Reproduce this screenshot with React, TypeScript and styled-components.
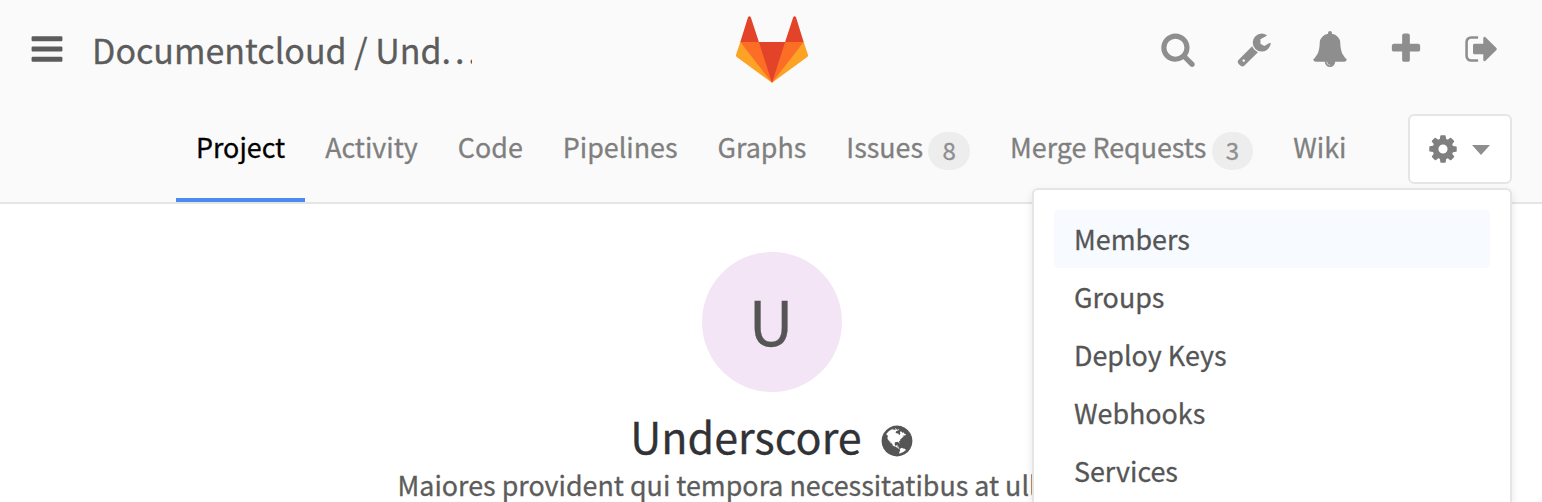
import React from "react";
import styled, { createGlobalStyle } from "styled-components";

const GlobalStyle = createGlobalStyle`
  * { box-sizing: border-box; }
  body {
    margin: 0;
    background: #fff;
    font-family: "Noto Sans CJK SC", "Noto Sans", sans-serif;
    color: #5c5c5c;
    -webkit-text-stroke: 0.3px currentColor;
  }
`;

const glyphs = {
  bars: "M1664 1344v128q0 26-19 45t-45 19h-1408q-26 0-45-19t-19-45v-128q0-26 19-45t45-19h1408q26 0 45 19t19 45zm0-512v128q0 26-19 45t-45 19h-1408q-26 0-45-19t-19-45v-128q0-26 19-45t45-19h1408q26 0 45 19t19 45zm0-512v128q0 26-19 45t-45 19h-1408q-26 0-45-19t-19-45v-128q0-26 19-45t45-19h1408q26 0 45 19t19 45z",
  search: "M1216 832q0-185-131.5-316.5t-316.5-131.5-316.5 131.5-131.5 316.5 131.5 316.5 316.5 131.5 316.5-131.5 131.5-316.5zm512 832q0 52-38 90t-90 38q-54 0-90-38l-343-342q-179 124-399 124-143 0-273.5-55.5t-225-150-150-225-55.5-273.5 55.5-273.5 150-225 225-150 273.5-55.5 273.5 55.5 225 150 150 225 55.5 273.5q0 220-124 399l343 343q37 37 37 90z",
  wrench: "M448 1472q0-26-19-45t-45-19-45 19-19 45 19 45 45 19 45-19 19-45zm644-420l-682 682q-37 37-90 37-52 0-91-37l-106-108q-38-36-38-90 0-53 38-91l681-681q39 98 114.5 173.5t173.5 114.5zm634-435q0 39-23 106-47 134-164.5 217.5t-258.5 83.5q-185 0-316.5-131.5t-131.5-316.5 131.5-316.5 316.5-131.5q58 0 121.5 16.5t107.5 46.5q16 11 16 28t-16 28l-293 169v224l193 107q5-3 79-48.5t135.5-81 70.5-35.5q15 0 23.5 10t8.5 25z",
  bell: "M912 1696q0-16-16-16-59 0-101.5-42.5t-42.5-101.5q0-16-16-16t-16 16q0 73 51.5 124.5t124.5 51.5q16 0 16-16zm816-288q0 52-38 90t-90 38h-448q0 106-75 181t-181 75-181-75-75-181h-448q-52 0-90-38t-38-90q50-42 91-88t85-119.5 74.5-158.5 50-206 19.5-260q0-152 117-282.5t307-158.5q-8-19-8-39 0-40 28-68t68-28 68 28 28 68q0 20-8 39 190 28 307 158.5t117 282.5q0 139 19.5 260t50 206 74.5 158.5 85 119.5 91 88z",
  plus: "M1600 736v192q0 40-28 68t-68 28h-416v416q0 40-28 68t-68 28h-192q-40 0-68-28t-28-68v-416h-416q-40 0-68-28t-28-68v-192q0-40 28-68t68-28h416v-416q0-40 28-68t68-28h192q40 0 68 28t28 68v416h416q40 0 68 28t28 68z",
  signOut: "M704 1440q0 4 1 20t.5 26.5-3 23.5-10 19.5-20.5 6.5h-320q-119 0-203.5-84.5t-84.5-203.5v-704q0-119 84.5-203.5t203.5-84.5h320q13 0 22.5 9.5t9.5 22.5q0 4 1 20t.5 26.5-3 23.5-10 19.5-20.5 6.5h-320q-66 0-113 47t-47 113v704q0 66 47 113t113 47h312l11.5 1 11.5 3 8 5.5 7 9 2 13.5zm928-544q0 26-19 45l-544 544q-19 19-45 19t-45-19-19-45v-288h-448q-26 0-45-19t-19-45v-384q0-26 19-45t45-19h448v-288q0-26 19-45t45-19 45 19l544 544q19 19 19 45z",
  cog: "M1152 896q0-106-75-181t-181-75-181 75-75 181 75 181 181 75 181-75 75-181zm512-109v222q0 12-8 23t-20 13l-185 28q-19 54-39 91 35 50 107 138 10 12 10 25t-9 23q-27 37-99 108t-94 71q-12 0-26-9l-138-108q-44 23-91 38-16 136-29 186-7 28-36 28h-222q-14 0-24.5-8.5t-11.5-21.5l-28-184q-49-16-90-37l-141 107q-10 9-25 9-14 0-25-11-126-114-165-168-7-10-7-23 0-12 8-23 15-21 51-66.5t54-70.5q-27-50-41-99l-183-27q-13-2-21-12.5t-8-23.5v-222q0-12 8-23t19-13l186-28q14-46 39-92-40-57-107-138-10-12-10-24 0-10 9-23 26-36 98.5-107.5t94.5-71.5q13 0 26 10l138 107q44-23 91-38 16-136 29-186 7-28 36-28h222q14 0 24.5 8.5t11.5 21.5l28 184q49 16 90 37l142-107q9-9 24-9 13 0 25 10 129 119 165 170 7 8 7 22 0 12-8 23-15 21-51 66.5t-54 70.5q26 50 41 98l183 28q13 2 21 12.5t8 23.5z",
  globe: "M896 128q209 0 385.5 103t279.5 279.5 103 385.5-103 385.5-279.5 279.5-385.5 103-385.5-103-279.5-279.5-103-385.5 103-385.5 279.5-279.5 385.5-103zm274 521q-2 1-9.5 9.5t-13.5 9.5q2 0 4.5-5t5-11 3.5-7q6-7 22-15 14-6 52-12 34-8 51 11-2-2 9.5-13t14.5-12q3-2 15-4.5t15-7.5l2-22q-12 1-17.5-7t-6.5-21q0 2-6 8 0-7-4.5-8t-11.5 1-9 1q-10-3-15-7.5t-8-16.5-4-15q-2-5-9.5-11t-9.5-10q-1-2-2.5-5.5t-3-6.5-4-5.5-5.5-2.5-7 5-7.5 10-4.5 5q-3-2-6-1.5t-4.5 1-4.5 3-5 3.5q-3 2-8.5 3t-8.5 2q15-5-1-11-10-4-16-3 9-4 7.5-12t-8.5-14h5q-1-4-8.5-8.5t-17.5-8.5-13-6q-8-5-34-9.5t-33-.5q-5 6-4.5 10.5t4 14 3.5 12.5q1 6-5.5 13t-6.5 12q0 7 14 15.5t10 21.5q-3 8-16 16t-16 12q-5 8-1.5 18.5t10.5 16.5q2 2 1.5 4t-3.5 4.5-5.5 4-6.5 3.5l-3 2q-11 5-20.5-6t-13.5-26q-7-25-16-30-23-8-29 1-5-13-41-26-25-9-58-4 6-1 0-15-7-15-19-12 3-6 4-17.5t1-13.5q3-13 12-23 1-1 7-8.5t9.5-13.5.5-6q35 4 50-11 5-5 11.5-17t10.5-17q9-6 14-5.5t14.5 5.5 14.5 5q14 1 15.5-11t-7.5-20q12 1 3-17-4-7-8-9-12-4-27 5-8 4 2 8-1-1-9.5 10.5t-16.5 17.5-16-5q-1-1-5.5-13.5t-9.5-13.5q-8 0-16 15 3-8-11-15t-24-8q19-12-8-27-7-4-20.5-5t-19.5 4q-5 7-5.5 11.5t5 8 10.5 5.5 11.5 4 8.5 3q14 10 8 14-2 1-8.5 3.5t-11.5 4.5-6 4q-3 4 0 14t-2 14q-5-5-9-17.5t-7-16.5q7 9-25 6l-10-1q-4 0-16 2t-20.5 1-13.5-8q-4-8 0-20 1-4 4-2-4-3-11-9.5t-10-8.5q-46 15-94 41 6 1 12-1 5-2 13-6.5t10-5.5q34-14 42-7l5-5q14 16 20 25-7-4-30-1-20 6-22 12 7 12 5 18-4-3-11.5-10t-14.5-11-15-5q-16 0-22 1-146 80-235 222 7 7 12 8 4 1 5 9t2.5 11 11.5-3q9 8 3 19 1-1 44 27 19 17 21 21 3 11-10 18-1-2-9-9t-9-4q-3 5 .5 18.5t10.5 12.5q-7 0-9.5 16t-2.5 35.5-1 23.5l2 1q-3 12 5.5 34.5t21.5 19.5q-13 3 20 43 6 8 8 9 3 2 12 7.5t15 10 10 10.5q4 5 10 22.5t14 23.5q-2 6 9.5 20t10.5 23q-1 0-2.5 1t-2.5 1q3 7 15.5 14t15.5 13q1 3 2 10t3 11 8 2q2-20-24-62-15-25-17-29-3-5-5.5-15.5t-4.5-14.5q2 0 6 1.5t8.5 3.5 7.5 4 2 3q-3 7 2 17.5t12 18.5 17 19 12 13q6 6 14 19.5t0 13.5q9 0 20 10.5t17 19.5q5 8 8 26t5 24q2 7 8.5 13.5t12.5 9.5l16 8 13 7q5 2 18.5 10.5t21.5 11.5q10 4 16 4t14.5-2.5 13.5-3.5q15-2 29 15t21 21q36 19 55 11-2 1 .5 7.5t8 15.5 9 14.5 5.5 8.5q5 6 18 15t18 15q6-4 7-9-3 8 7 20t18 10q14-3 14-32-31 15-49-18 0-1-2.5-5.5t-4-8.5-2.5-8.5 0-7.5 5-3q9 0 10-3.5t-2-12.5-4-13q-1-8-11-20t-12-15q-5 9-16 8t-16-9q0 1-1.5 5.5t-1.5 6.5q-13 0-15-1 1-3 2.5-17.5t3.5-22.5q1-4 5.5-12t7.5-14.5 4-12.5-4.5-9.5-17.5-2.5q-19 1-26 20-1 3-3 10.5t-5 11.5-9 7q-7 3-24 2t-24-5q-13-8-22.5-29t-9.5-37q0-10 2.5-26.5t3-25-5.5-24.5q3-2 9-9.5t10-10.5q2-1 4.5-1.5t4.5 0 4-1.5 3-6q-1-1-4-3-3-3-4-3 7 3 28.5-1.5t27.5 1.5q15 11 22-2 0-1-2.5-9.5t-.5-13.5q5 27 29 9 3 3 15.5 5t17.5 5q3 2 7 5.5t5.5 4.5 5-.5 8.5-6.5q10 14 12 24 11 40 19 44 7 3 11 2t4.5-9.5 0-14-1.5-12.5l-1-8v-18l-1-8q-15-3-18.5-12t1.5-18.5 15-18.5q1-1 8-3.5t15.5-6.5 12.5-8q21-19 15-35 7 0 11-9-1 0-5-3t-7.5-5-4.5-2q9-5 2-16 5-3 7.5-11t7.5-10q9 12 21 2 8-8 1-16 5-7 20.5-10.5t18.5-9.5q7 2 8-2t1-12 3-12q4-5 15-9t13-5l17-11q3-4 0-4 18 2 31-11 10-11-6-20 3-6-3-9.5t-15-5.5q3-1 11.5-.5t10.5-1.5q15-10-7-16-17-5-43 12zm-163 877q206-36 351-189-3-3-12.5-4.5t-12.5-3.5q-18-7-24-8 1-7-2.5-13t-8-9-12.5-8-11-7q-2-2-7-6t-7-5.5-7.5-4.5-8.5-2-10 1l-3 1q-3 1-5.5 2.5t-5.5 3-4 3 0 2.5q-21-17-36-22-5-1-11-5.5t-10.5-7-10-1.5-11.5 7q-5 5-6 15t-2 13q-7-5 0-17.5t2-18.5q-3-6-10.5-4.5t-12 4.5-11.5 8.5-9 6.5-8.5 5.5-8.5 7.5q-3 4-6 12t-5 11q-2-4-11.5-6.5t-9.5-5.5q2 10 4 35t5 38q7 31-12 48-27 25-29 40-4 22 12 26 0 7-8 20.5t-7 21.5q0 6 2 16z",
};

const Glyph = styled.svg<{ $size: number }>`
  display: block;
  flex: none;
  width: ${(p) => p.$size}px;
  height: ${(p) => p.$size}px;
  fill: currentColor;
`;

function Icon({ name, size = 36 }: { name: keyof typeof glyphs; size?: number }) {
  return (
    <Glyph $size={size} viewBox="0 0 1792 1792" aria-hidden="true">
      <path d={glyphs[name]} />
    </Glyph>
  );
}

const Page = styled.div`
  height: 100vh;
  overflow: hidden;
`;

const Header = styled.header`
  height: 204px;
  background: #fafafa;
  border-bottom: 2px solid #e5e5e5;
`;

const TopBar = styled.div`
  display: grid;
  grid-template-columns: 1fr 72px 1fr;
  align-items: center;
  height: 98px;
  padding: 0 42px;
`;

const TitleArea = styled.div`
  display: flex;
  align-items: center;
  gap: 27px;
  margin-left: -13px;
`;

const Title = styled.h1`
  width: 380px;
  margin: 2px 0 0;
  overflow: hidden;
  white-space: nowrap;
  font-size: 34px;
  line-height: 48px;
  font-weight: 400;
`;

const Dots = styled.span`
  letter-spacing: 3.9px;
`;

const Logo = styled.svg`
  display: block;
  width: 72px;
  height: 67px;
  margin-left: 1px;
`;

const Actions = styled.div`
  display: flex;
  justify-content: flex-end;
  gap: 40px;
  color: #8e8e8e;
`;

const NavBar = styled.nav`
  display: flex;
  justify-content: space-between;
  height: 104px;
  padding: 0 30px 0 176px;
`;

const Tabs = styled.div`
  display: flex;
`;

const Tab = styled.a<{ $active?: boolean }>`
  display: flex;
  align-items: flex-start;
  padding: 29px 20px 0;
  height: 104px;
  white-space: nowrap;
  font-size: 26.85px;
  line-height: 40px;
  color: ${(p) => (p.$active ? "#000" : "#7f7f7f")};
  border-bottom: 4px solid ${(p) => (p.$active ? "#4a8bee" : "transparent")};
`;

const Badge = styled.span`
  margin: 5px 0 0 5.3px;
  width: 41.7px;
  height: 38px;
  border-radius: 19px;
  background: #ededed;
  color: #8e8e8e;
  text-align: center;
  font-size: 24px;
  line-height: 36px;
`;

const Settings = styled.div`
  position: relative;
  margin-top: 16px;
`;

const SettingsButton = styled.button`
  display: flex;
  align-items: center;
  gap: 13px;
  width: 104px;
  height: 70px;
  padding: 0 0 1px 17px;
  background: #fff;
  border: 2px solid #e5e5e5;
  border-radius: 6px;
  color: #7f7f7f;
`;

const Caret = styled.span`
  margin-top: 2px;
  border: 9px solid transparent;
  border-top: 10px solid #8e8e8e;
  border-bottom: 0;
`;

const Menu = styled.ul`
  position: absolute;
  z-index: 2;
  top: 74px;
  right: 0;
  width: 480px;
  margin: 0;
  padding: 20px 20px 2px;
  list-style: none;
  background: #fff;
  border: 2px solid #e5e5e5;
  border-bottom: 0;
  border-radius: 6px 6px 0 0;
  box-shadow: 0 4px 8px rgba(0, 0, 0, 0.1);
`;

const MenuItem = styled.li<{ $hovered?: boolean }>`
  height: 58px;
  padding: 0 20px;
  border-radius: 4px;
  background: ${(p) => (p.$hovered ? "#f7faff" : "transparent")};
  color: #555;
  font-size: 26.85px;
  line-height: 58px;
`;

const Project = styled.main`
  display: flex;
  flex-direction: column;
  align-items: center;
  padding: 48px 0 0 2px;
`;

const Avatar = styled.div`
  width: 140px;
  height: 140px;
  border-radius: 50%;
  background: #f3e5f5;
  color: #555;
  text-align: center;
  font-size: 62px;
  line-height: 134px;
  text-indent: -2px;
`;

const NameRow = styled.div`
  display: flex;
  align-items: center;
  gap: 17px;
  height: 66px;
  margin: 14px 0 0 1px;
`;

const Name = styled.h2`
  margin: 0;
  color: #313236;
  font-size: 43px;
  line-height: 58px;
  height: 66px;
  font-weight: 400;
`;

const Visibility = styled.span`
  margin-top: 4px;
  color: #555;
`;

const Description = styled.p`
  width: 749px;
  margin: -7px 0 0;
  white-space: nowrap;
  font-size: 26.85px;
  line-height: 40px;
`;

const tabs: { label: string; count?: number }[] = [
  { label: "Project" },
  { label: "Activity" },
  { label: "Code" },
  { label: "Pipelines" },
  { label: "Graphs" },
  { label: "Issues", count: 8 },
  { label: "Merge Requests", count: 3 },
  { label: "Wiki" },
];

const menuItems = ["Members", "Groups", "Deploy Keys", "Webhooks", "Services"];

export default function App() {
  return (
    <Page>
      <GlobalStyle />
      <Header>
        <TopBar>
          <TitleArea>
            <Icon name="bars" />
            <Title>
              Documentcloud / Und<Dots>...</Dots>
            </Title>
          </TitleArea>
          <Logo viewBox="0 0 72 67" aria-label="GitLab">
            <path fill="#fca326" d="M4.3 26L.1 38.4q-.4 1.7 1 2.8L36 66.8l34.9-25.6q1.4-1.1 1-2.8L67.7 26z" />
            <path fill="#fc6d26" d="M4.3 26H67.7L36 66.8z" />
            <path fill="#e24329" d="M4.3 26L12 1.2q1.4-1.900 2.800 0L22.900 26H49.100L57.200 1.200q1.400-1.900 2.800 0L67.700 26H49.100L36 66.800 22.900 26z" />
          </Logo>
          <Actions>
            <Icon name="search" />
            <Icon name="wrench" />
            <Icon name="bell" />
            <Icon name="plus" />
            <Icon name="signOut" />
          </Actions>
        </TopBar>
        <NavBar>
          <Tabs>
            {tabs.map((tab, i) => (
              <Tab key={tab.label} $active={i === 0}>
                {tab.label}
                {tab.count !== undefined && <Badge>{tab.count}</Badge>}
              </Tab>
            ))}
          </Tabs>
          <Settings>
            <SettingsButton aria-label="Settings">
              <Icon name="cog" size={32} />
              <Caret />
            </SettingsButton>
            <Menu>
              {menuItems.map((item, i) => (
                <MenuItem key={item} $hovered={i === 0}>
                  {item}
                </MenuItem>
              ))}
            </Menu>
          </Settings>
        </NavBar>
      </Header>
      <Project>
        <Avatar>U</Avatar>
        <NameRow>
          <Name>Underscore</Name>
          <Visibility>
            <Icon name="globe" />
          </Visibility>
        </NameRow>
        <Description>Maiores provident qui tempora necessitatibus at ullam</Description>
      </Project>
    </Page>
  );
}
